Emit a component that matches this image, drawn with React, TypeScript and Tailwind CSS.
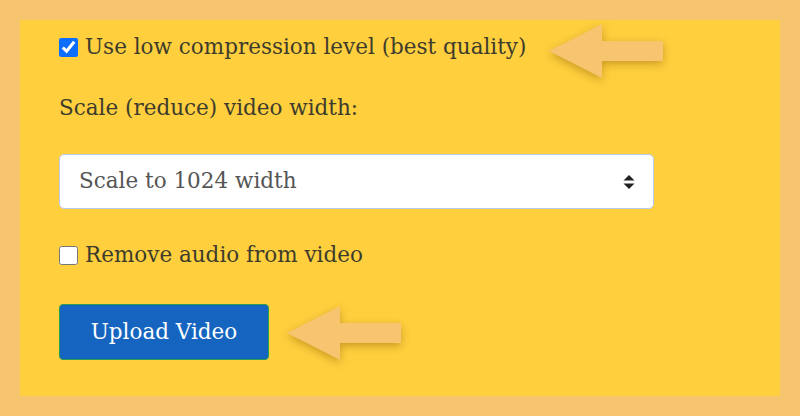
import { useState } from 'react';

function Arrow({ className }: { className: string }) {
  // left pointing block arrow
  return (
    <svg
      className={className}
      width="118"
      height="58"
      viewBox="0 0 118 58"
      fill="none"
    >
      <polygon
        points="2,27 55,0 55,17 116,17 116,37 55,37 55,54"
        fill="#f7c46f"
      />
    </svg>
  );
}

export default function App() {
  const [lowCompression, setLowCompression] = useState(true);
  const [removeAudio, setRemoveAudio] = useState(false);
  const [scale, setScale] = useState('1024');

  return (
    <div className="w-[800px] h-[416px] bg-[#f7c46f] p-[20px] font-['DejaVu_Serif',serif] text-[21.5px] text-[#3d3c2c]">
      <div className="relative h-[376px] bg-[#ffcf3e] pl-[39px] pt-[12px]">
        <label className="flex h-[30px] items-center gap-[7px]">
          <input
            type="checkbox"
            checked={lowCompression}
            onChange={(e) => setLowCompression(e.target.checked)}
            className="m-0 h-[19px] w-[19px] shrink-0 accent-[#0d6efd]"
          />
          <span>Use low compression level (best quality)</span>
        </label>

        <div className="mt-[31px] flex h-[30px] items-center">
          Scale (reduce) video width:
        </div>

        <div className="relative mt-[31px] w-[595px]">
          <select
            value={scale}
            onChange={(e) => setScale(e.target.value)}
            className="h-[55px] w-full appearance-none rounded-[5px] border border-[#b9c9ee] bg-white pl-[19px] text-[#555555] outline-none"
          >
            <option value="1024">Scale to 1024 width</option>
            <option value="800">Scale to 800 width</option>
            <option value="640">Scale to 640 width</option>
            <option value="0">No scaling</option>
          </select>
          <svg
            className="pointer-events-none absolute right-[19px] top-[21px]"
            width="12"
            height="14"
            viewBox="0 0 12 14"
          >
            <path d="M6 0 L11.5 5.5 H0.5 Z" fill="#222" />
            <path d="M6 14 L11.5 8.5 H0.5 Z" fill="#222" />
          </svg>
        </div>

        <label className="mt-[31px] flex h-[30px] items-center gap-[7px]">
          <input
            type="checkbox"
            checked={removeAudio}
            onChange={(e) => setRemoveAudio(e.target.checked)}
            className="m-0 h-[19px] w-[19px] shrink-0 accent-[#0d6efd]"
          />
          <span>Remove audio from video</span>
        </label>

        <button
          type="button"
          className="mt-[34px] h-[56px] w-[210px] rounded-[4px] border border-[#2a9d52] bg-[#1565c0] text-white"
        >
          Upload Video
        </button>

        <Arrow className="absolute left-[527px] top-[4px] drop-shadow-[0_3px_4px_rgba(140,90,0,0.45)]" />
        <Arrow className="absolute left-[265px] top-[286px] drop-shadow-[0_3px_4px_rgba(140,90,0,0.45)]" />
      </div>
    </div>
  );
}
